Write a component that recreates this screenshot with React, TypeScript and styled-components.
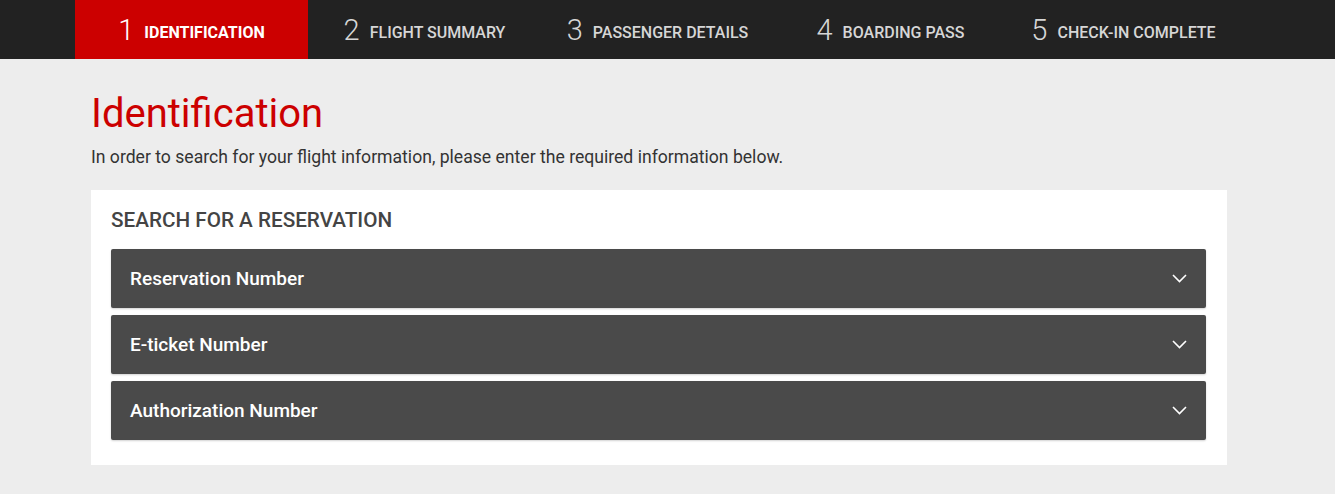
import styled, { createGlobalStyle } from 'styled-components'

const GlobalStyle = createGlobalStyle`
  body {
    margin: 0;
    background: #ededed;
    font-family: Roboto, "Liberation Sans", sans-serif;
    color: #333;
  }
`

const StepsBar = styled.nav`
  background: #222222;
  height: 59px;
`

const StepsList = styled.ol`
  display: flex;
  margin: 0;
  padding: 0 0 0 75px;
  list-style: none;
  height: 100%;
`

const Step = styled.li<{ $active?: boolean }>`
  width: 233px;
  display: flex;
  align-items: center;
  justify-content: center;
  gap: 10px;
  padding-top: 2px;
  background: ${(p) => (p.$active ? '#cc0000' : 'transparent')};
  color: ${(p) => (p.$active ? '#ffffff' : '#d6d6d6')};
`

const StepNumber = styled.span`
  font-size: 29px;
  font-weight: 300;
  line-height: 1;
`

const StepLabel = styled.span<{ $active?: boolean }>`
  font-size: 16px;
  font-weight: ${(p) => (p.$active ? 700 : 500)};
  text-transform: uppercase;
  padding-top: 3px;
`

const Main = styled.main`
  width: 1136px;
  margin-left: 91px;
  padding-bottom: 29px;
`

const Title = styled.h1`
  margin: 0;
  padding-top: 31px;
  font-size: 40px;
  font-weight: 400;
  line-height: 47px;
  color: #cc0000;
`

const Intro = styled.p`
  margin: 8px 0 21px;
  font-size: 17.6px;
  line-height: 24px;
  color: #333;
`

const Card = styled.section`
  background: #ffffff;
  padding: 16px 21px 25px 20px;
`

const CardTitle = styled.h2`
  margin: 0 0 15px;
  font-size: 20.7px;
  font-weight: 500;
  line-height: 28px;
  color: #444;
  text-transform: uppercase;
`

const Accordion = styled.div`
  display: flex;
  flex-direction: column;
  gap: 7px;
`

const Panel = styled.button`
  display: flex;
  align-items: center;
  justify-content: space-between;
  width: 100%;
  height: 59px;
  padding: 0 19px;
  border: none;
  border-radius: 2px;
  box-shadow: 0 1px 2px rgba(0, 0, 0, 0.18);
  background: #4a4a4a;
  color: #ffffff;
  font-family: inherit;
  font-size: 19px;
  font-weight: 500;
  text-align: left;
  cursor: pointer;
`

const Chevron = () => (
  <svg width="15" height="9" viewBox="0 0 15 9" fill="none">
    <path d="M1 1l6.5 6.5L14 1" stroke="#ffffff" strokeWidth="1.6" />
  </svg>
)

const steps = [
  'Identification',
  'Flight Summary',
  'Passenger Details',
  'Boarding Pass',
  'Check-in Complete',
]

const panels = ['Reservation Number', 'E-ticket Number', 'Authorization Number']

export default function App() {
  return (
    <>
      <GlobalStyle />
      <StepsBar>
        <StepsList>
          {steps.map((label, i) => (
            <Step key={label} $active={i === 0}>
              <StepNumber>{i + 1}</StepNumber>
              <StepLabel $active={i === 0}>{label}</StepLabel>
            </Step>
          ))}
        </StepsList>
      </StepsBar>
      <Main>
        <Title>Identification</Title>
        <Intro>
          In order to search for your flight information, please enter the required information
          below.
        </Intro>
        <Card>
          <CardTitle>Search for a reservation</CardTitle>
          <Accordion>
            {panels.map((p) => (
              <Panel key={p}>
                {p}
                <Chevron />
              </Panel>
            ))}
          </Accordion>
        </Card>
      </Main>
    </>
  )
}
